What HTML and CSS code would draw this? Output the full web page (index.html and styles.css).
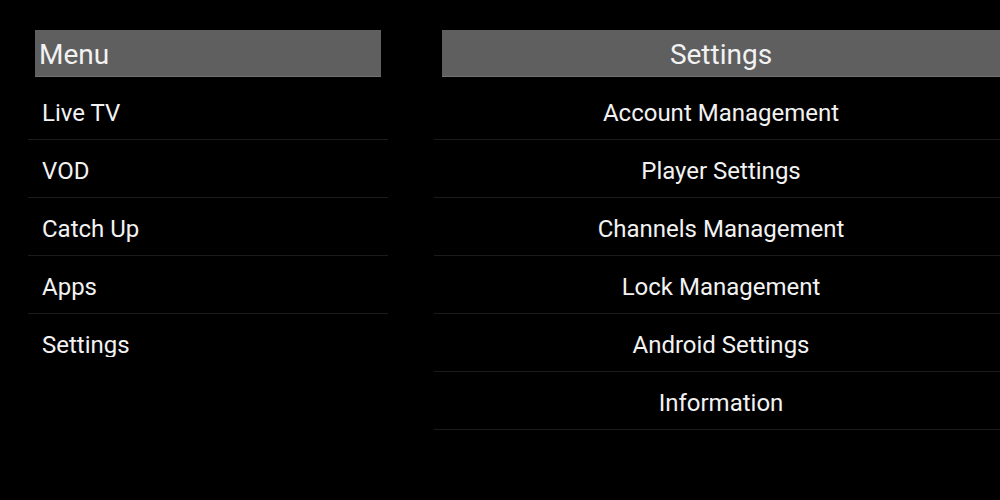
FILE: index.html
```html
<!DOCTYPE html>
<html lang="en">
<head>
<meta charset="utf-8">
<title>Settings</title>
<link rel="stylesheet" href="styles.css">
</head>
<body>
<div class="screen">
  <section class="panel panel-menu">
    <div class="panel-header">Menu</div>
    <ul class="list list-menu">
      <li class="row">Live TV</li>
      <li class="row">VOD</li>
      <li class="row">Catch Up</li>
      <li class="row">Apps</li>
      <li class="row">Settings</li>
    </ul>
  </section>
  <section class="panel panel-settings">
    <div class="panel-header">Settings</div>
    <ul class="list list-settings">
      <li class="row">Account Management</li>
      <li class="row">Player Settings</li>
      <li class="row">Channels Management</li>
      <li class="row">Lock Management</li>
      <li class="row">Android Settings</li>
      <li class="row">Information</li>
    </ul>
  </section>
</div>
</body>
</html>
```

FILE: styles.css
```css
html, body {
  margin: 0;
  padding: 0;
  background: #000;
  width: 1000px;
  height: 500px;
  overflow: hidden;
}

body {
  font-family: Roboto, "Liberation Sans", sans-serif;
  color: #f2f2f2;
}

.screen {
  display: flex;
  padding-top: 30px;
  padding-left: 28px;
  gap: 46px;
}

.panel {
  flex: none;
  display: flex;
  flex-direction: column;
}

.panel-menu {
  width: 360px;
}

.panel-settings {
  width: 574px;
}

.panel-header {
  height: 42px;
  line-height: 42px;
  padding-top: 4px;
  background: #5f5f5f;
  border-bottom: 1px solid #727272;
  font-size: 28px;
  white-space: nowrap;
}

.panel-menu .panel-header {
  margin: 0 7px;
  padding-left: 4px;
}

.panel-settings .panel-header {
  margin: 0 8px;
  text-align: center;
}

.list {
  list-style: none;
  margin: 5px 0 0;
  padding: 0;
}

.list-menu {
  height: 275px;
  overflow: hidden;
}

.row {
  height: 52px;
  line-height: 52px;
  padding-top: 5px;
  border-bottom: 1px solid #1b1b1b;
  font-size: 24px;
  white-space: nowrap;
}

.list-menu .row {
  padding-left: 14px;
}

.list-settings .row {
  text-align: center;
}
```
